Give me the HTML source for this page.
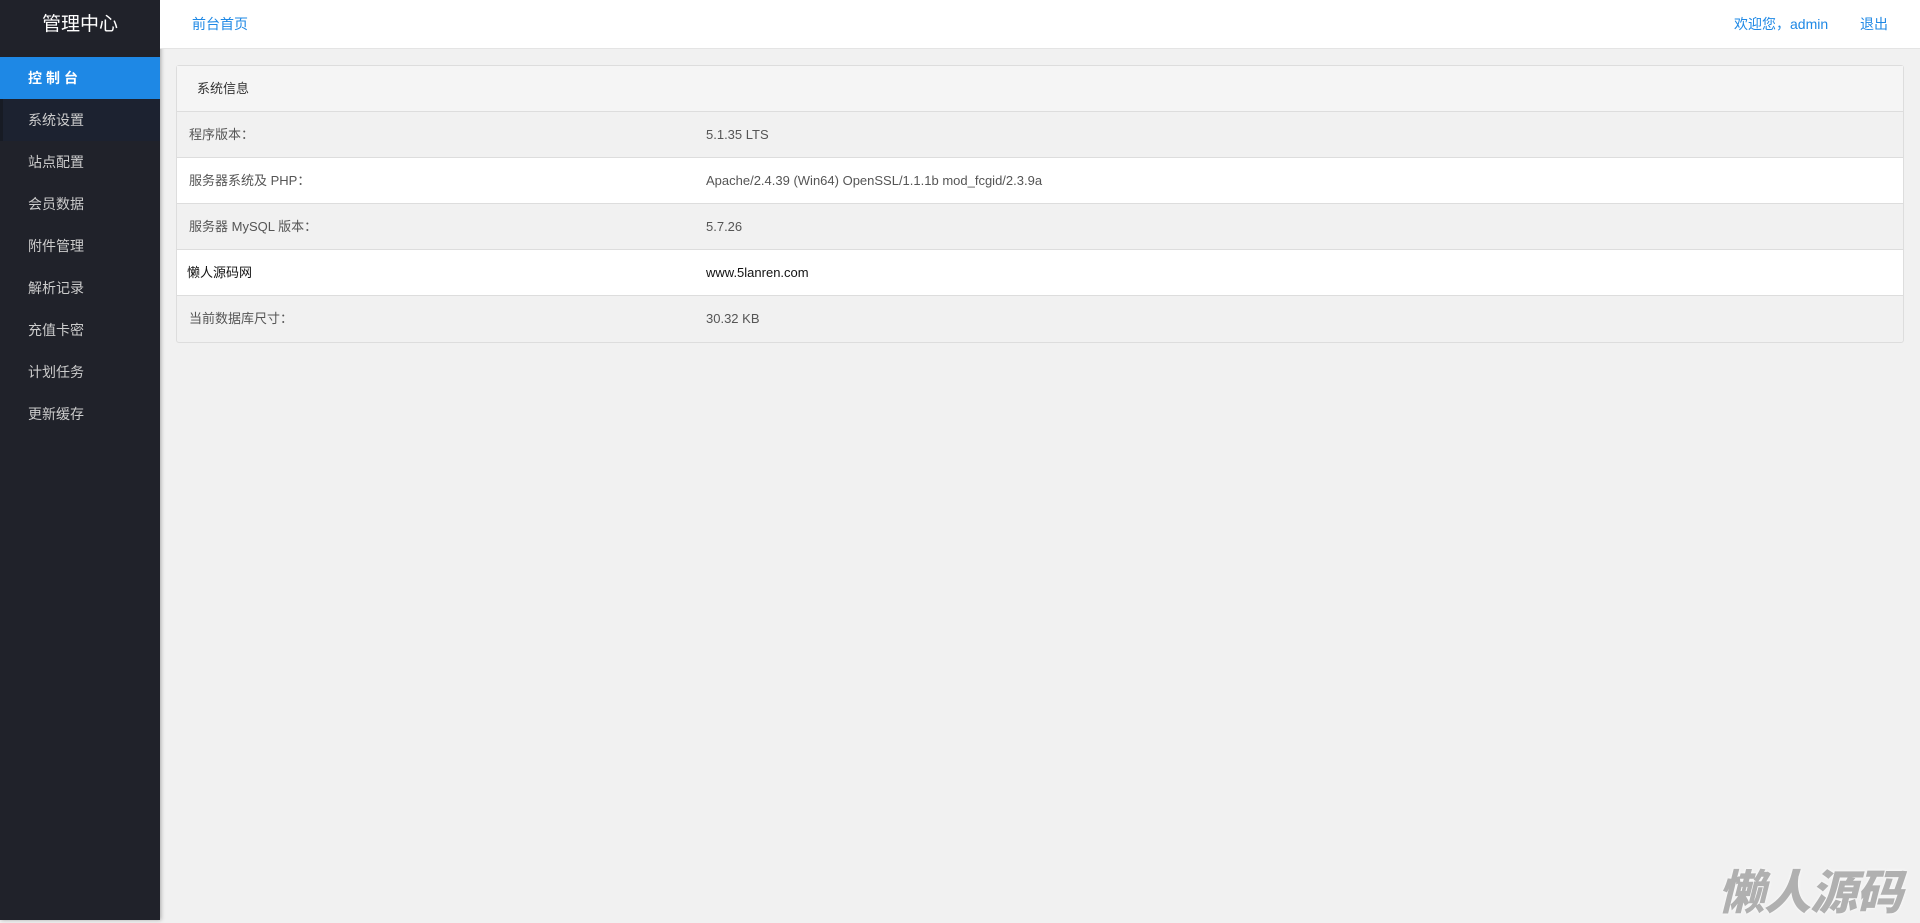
<!DOCTYPE html>
<html><head><meta charset="utf-8"><style>
*{margin:0;padding:0;box-sizing:border-box}
body{width:1920px;height:920px;overflow:hidden;background:#f1f1f1;font-family:"Liberation Sans","Noto Sans CJK SC",sans-serif;font-size:14px;color:#333;position:relative}
.side{position:absolute;left:0;top:0;width:160px;height:920px;background:#20222a;box-shadow:1px 0 4px rgba(0,0,0,.3)}
.logo{height:50px;line-height:50px;text-align:center;color:#fff;font-size:19px}
.side a{display:block;height:42px;line-height:42px;padding-left:28px;color:#ccc;font-size:14px;text-decoration:none}
.side a.on{background:#1e88e5;color:#fff;font-weight:bold;letter-spacing:4px;margin-top:7px}
.side a.sub{background:#1c2230;border-left:3px solid #171b24;padding-left:25px}
.top{position:absolute;left:160px;right:0;top:0;height:49px;background:#fff;border-bottom:1px solid #e4e4e4}
.top a{position:absolute;top:0;line-height:48px;color:#1e88e5;font-size:14px}
.panel{position:absolute;left:176px;top:65px;width:1728px;border:1px solid #ddd;border-radius:3px;background:#f1f1f1}
.ph{height:46px;line-height:46px;padding-left:20px;background:#f5f5f5;border-bottom:1px solid #ddd;font-size:13px}
.row{height:46px;line-height:45px;border-bottom:1px solid #ddd;font-size:13px;position:relative;color:#555}
.row:last-child{border-bottom:none}
.row.w{background:#fff}
.row span{position:absolute;left:12px}
.row span+span{left:529px}
.row.k{color:#111}
.wm{position:absolute;left:1718px;top:854px;font-size:47px;font-weight:900;font-style:italic;color:#b0b0b0;letter-spacing:-1px;text-shadow:0 0 3px #fff}
</style></head><body>
<div class="side">
<div class="logo">管理中心</div>
<a class="on">控制台</a>
<a class="sub">系统设置</a>
<a>站点配置</a>
<a>会员数据</a>
<a>附件管理</a>
<a>解析记录</a>
<a>充值卡密</a>
<a>计划任务</a>
<a>更新缓存</a>
</div>
<div class="top">
<a style="left:32px">前台首页</a>
<a style="left:1574px">欢迎您，admin</a>
<a style="left:1700px">退出</a>
</div>
<div class="panel">
<div class="ph">系统信息</div>
<div class="row"><span>程序版本：</span><span>5.1.35 LTS</span></div>
<div class="row w"><span>服务器系统及 PHP：</span><span>Apache/2.4.39 (Win64) OpenSSL/1.1.1b mod_fcgid/2.3.9a</span></div>
<div class="row"><span>服务器 MySQL 版本：</span><span>5.7.26</span></div>
<div class="row w k"><span style="left:10px">懒人源码网</span><span style="left:529px">www.5lanren.com</span></div>
<div class="row"><span>当前数据库尺寸：</span><span>30.32 KB</span></div>
</div>
<div class="wm">懒人源码</div>
</body></html>
